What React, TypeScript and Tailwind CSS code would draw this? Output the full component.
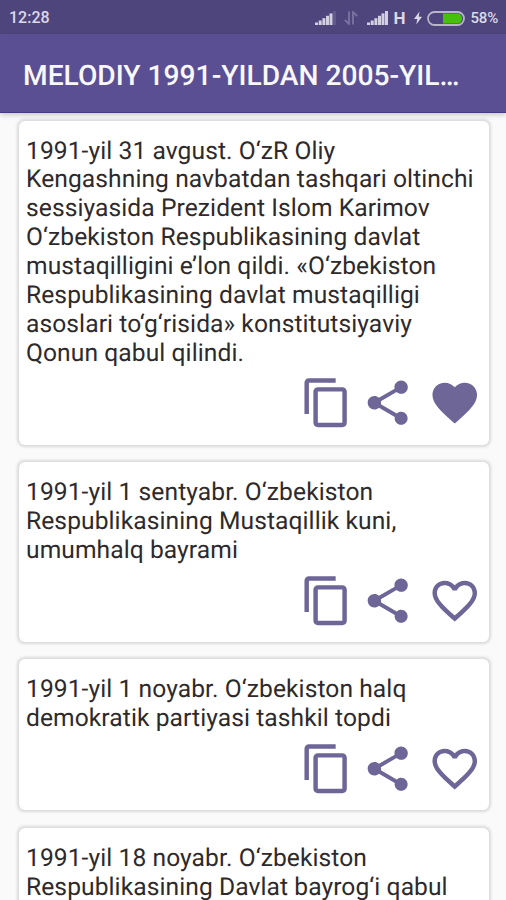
import { MdContentCopy, MdFavorite, MdFavoriteBorder, MdShare } from 'react-icons/md'

interface EventItem {
  id: number
  lines: string[]
  favorite: boolean
}

const events: EventItem[] = [
  {
    id: 1,
    lines: [
      '1991-yil 31 avgust. O‘zR Oliy',
      'Kengashning navbatdan tashqari oltinchi',
      'sessiyasida Prezident Islom Karimov',
      'O‘zbekiston Respublikasining davlat',
      'mustaqilligini e’lon qildi. «O‘zbekiston',
      'Respublikasining davlat mustaqilligi',
      'asoslari to‘g‘risida» konstitutsiyaviy',
      'Qonun qabul qilindi.',
    ],
    favorite: true,
  },
  {
    id: 2,
    lines: ['1991-yil 1 sentyabr. O‘zbekiston', 'Respublikasining Mustaqillik kuni,', 'umumhalq bayrami'],
    favorite: false,
  },
  {
    id: 3,
    lines: ['1991-yil 1 noyabr. O‘zbekiston halq', 'demokratik partiyasi tashkil topdi'],
    favorite: false,
  },
  {
    id: 4,
    lines: ['1991-yil 18 noyabr. O‘zbekiston', 'Respublikasining Davlat bayrog‘i qabul'],
    favorite: false,
  },
]

function Signal({ weak = false }: { weak?: boolean }) {
  return (
    <svg className="h-[14px] w-[21px]" viewBox="0 0 21 14" fill="#d3d0e2">
      <rect x="0" y="11.5" width="3" height="2.5" />
      <rect x="3.7" y="9.5" width="3" height="4.5" />
      <rect x="7.4" y="7.2" width="3" height="6.8" />
      <rect x="11" y="4.8" width="3" height="9.2" />
      <rect x="14.5" y="2.4" width="3" height="11.6" />
      <rect x="18" y="0" width="3" height="14" opacity={weak ? 0.15 : 1} />
    </svg>
  )
}

function StatusBar() {
  return (
    <div className="flex h-[34px] shrink-0 items-center bg-[#4e457c] pt-[2px] pr-[8px] pl-[9px] text-[#dcd9e8]">
      <span className="text-[16px] font-medium">12:28</span>
      <div className="ml-auto flex items-center">
        <Signal weak />
        <svg className="mr-[9px] ml-[8px] h-[14px] w-[14px]" viewBox="0 0 14 14" fill="none" stroke="#7c749f" strokeWidth="1.8">
          <path d="M5 0.5V13L0.8 8.8M9 13.5V1l4.2 4.2" />
        </svg>
        <Signal />
        <span className="ml-[5px] text-[17px] leading-none font-bold">H</span>
        <svg className="ml-[8px] h-[14px] w-[8px]" viewBox="0 0 8 14" fill="#dcd9e8">
          <path d="M5.5 0.5L0 8h3.3L2.3 13.5 8 5.8H4.7z" />
        </svg>
        <svg className="ml-[5px] h-[15px] w-[38px]" viewBox="0 0 38 15">
          <path d="M16 2.5h15a4.5 4.5 0 0 1 4 5 4.5 4.5 0 0 1-4 5H16z" fill="#45c10a" />
          <rect x="1" y="1" width="36" height="13" rx="6.5" fill="none" stroke="#b8b4ca" strokeWidth="1.8" />
        </svg>
        <span className="ml-[6px] text-[15px] font-medium tracking-[-0.2px]">58%</span>
      </div>
    </div>
  )
}

function EventCard({ event }: { event: EventItem }) {
  return (
    <div className="rounded-[6px] bg-white pt-[17.1px] pr-[8px] pb-[14.7px] pl-[7px] shadow-[0_0_3px_1.5px_rgba(0,0,0,0.13)]">
      <p className="text-[24.6px] leading-[28.85px] tracking-[0.08px] whitespace-nowrap text-[#2e2a2c] [text-rendering:geometricPrecision]">
        {event.lines.map((line) => (
          <span key={line} className="block">
            {line}
          </span>
        ))}
      </p>
      <div className="mt-[8px] flex justify-end text-[#6f6698]">
        <MdContentCopy className="mr-[7px] size-[53.5px]" />
        <MdShare className="mr-[13.5px] size-[53.5px]" />
        {event.favorite ? <MdFavorite className="size-[53.5px]" /> : <MdFavoriteBorder className="size-[53.5px]" />}
      </div>
    </div>
  )
}

export default function App() {
  return (
    <div className="flex h-[900px] w-[506px] flex-col overflow-hidden bg-[#fafafa] font-[Roboto,sans-serif]">
      <StatusBar />
      <header className="z-10 flex h-[79px] shrink-0 items-center border-b border-[#463a80] bg-[#5a4f93] px-[23px] pt-[6px] shadow-[0_2px_5px_rgba(0,0,0,0.2)]">
        <h1 className="text-[28.2px] font-medium whitespace-nowrap text-[#f8f7fc] [text-rendering:geometricPrecision]">
          MELODIY 1991-YILDAN 2005-YIL…
        </h1>
      </header>
      <main className="flex min-h-0 flex-1 flex-col gap-[17.5px] overflow-hidden pt-[7.5px] pr-[17px] pl-[19px]">
        {events.map((event) => (
          <EventCard key={event.id} event={event} />
        ))}
      </main>
    </div>
  )
}
